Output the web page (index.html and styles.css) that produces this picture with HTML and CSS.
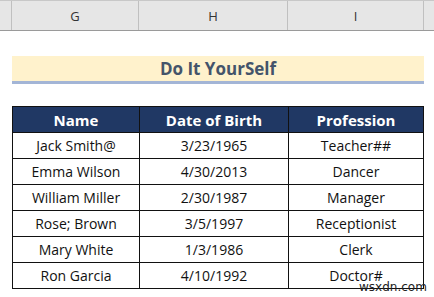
FILE: index.html
```html
<!DOCTYPE html>
<html lang="en">
<head>
    <meta charset="UTF-8">
    <title>Do It YourSelf</title>
    <link rel="stylesheet" href="styles.css">
</head>
<body>
    <!-- Cabeçalho de colunas da planilha -->
    <div class="col-header">
        <div class="corner"></div>
        <div class="col">G</div>
        <div class="col">H</div>
        <div class="col">I</div>
        <div class="rest"></div>
    </div>

    <div class="sheet">
        <div class="title">Do It YourSelf</div>

        <table class="data">
            <thead>
                <tr><th>Name</th><th>Date of Birth</th><th>Profession</th></tr>
            </thead>
            <tbody>
                <tr><td>Jack Smith@</td><td>3/23/1965</td><td>Teacher##</td></tr>
                <tr><td>Emma Wilson</td><td>4/30/2013</td><td>Dancer</td></tr>
                <tr><td>William Miller</td><td>2/30/1987</td><td>Manager</td></tr>
                <tr><td>Rose; Brown</td><td>3/5/1997</td><td>Receptionist</td></tr>
                <tr><td>Mary White</td><td>1/3/1986</td><td>Clerk</td></tr>
                <tr><td>Ron Garcia</td><td>4/10/1992</td><td>Doctor#</td></tr>
            </tbody>
        </table>
    </div>

    <span class="watermark">wsxdn.com</span>
</body>
</html>
```

FILE: styles.css
```css
body {
    margin: 0;
    width: 434px;
    height: 297px;
    overflow: hidden;
    background-color: #ffffff;
    font-family: 'Open Sans', sans-serif;
    position: relative;
}

/* Barra das letras das colunas */
.col-header {
    display: flex;
    height: 29px;
    background-color: #e6e6e6;
    border-top: 1px solid #c8c8c8;
    border-bottom: 1px solid #9a9a9a;
}

.col-header > div {
    border-right: 1px solid #c0c0c0;
}

.corner {
    width: 11px;
}

.col {
    display: flex;
    align-items: center;
    justify-content: center;
    font-size: 13px;
    color: #333333;
}

.col:nth-child(2) { width: 126px; }
.col:nth-child(3) { width: 148px; }
.col:nth-child(4) { width: 135px; }

.rest {
    flex: 1;
    border-right: none !important;
}

.sheet {
    padding: 25px 0 0 12px;
}

/* Faixa do título */
.title {
    width: 412px;
    height: 25px;
    background-color: #fff2cc;
    border-bottom: 3px solid #a3b5d6;
    text-align: center;
    font-size: 17px;
    font-weight: 700;
    line-height: 25px;
    color: #44546a;
}

.data {
    margin-top: 22px;
    border-collapse: collapse;
    font-size: 14px;
    color: #111111;
}

.data th, .data td {
    border: 1px solid #111111;
    text-align: center;
    padding: 0;
    height: 25px;
}

.data th {
    background-color: #203864;
    color: #ffffff;
    font-size: 15px;
    font-weight: 700;
}

.data th:nth-child(1) { width: 126px; }
.data th:nth-child(2) { width: 148px; }
.data th:nth-child(3) { width: 134px; }

.watermark {
    position: absolute;
    left: 359px;
    top: 280px;
    font-family: 'DejaVu Sans', sans-serif;
    font-size: 12px;
    color: #222222;
}
```
